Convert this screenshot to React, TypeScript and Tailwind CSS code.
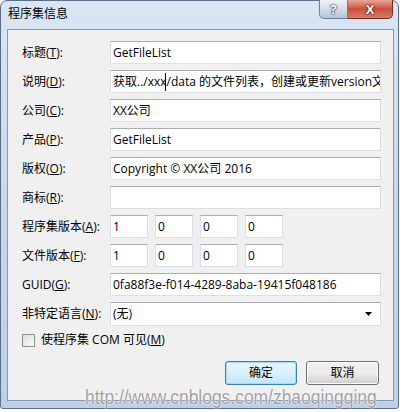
import React from "react";

const FONT = '"Segoe UI", "Open Sans", "Noto Sans CJK SC", sans-serif';

function TextBox({ children, className = "" }: { children?: React.ReactNode; className?: string }) {
  return (
    <div
      className={
        "h-[23px] min-w-0 bg-white border border-[#dcdfe6] border-t-[#abadb3] flex items-center pl-[2px] overflow-hidden whitespace-nowrap text-[12px] text-black " +
        className
      }
    >
      {children}
    </div>
  );
}

function Row({ label, u, rest, children }: { label: string; u: string; rest?: string; children: React.ReactNode }) {
  return (
    <div className="flex items-center h-[23px]">
      <div className="w-[88px] shrink-0 text-[12px] text-black whitespace-nowrap">
        {label}(<span className="underline">{u}</span>){rest ?? ":"}
      </div>
      <div className="flex-1 min-w-0">{children}</div>
    </div>
  );
}

function Versions() {
  return (
    <div className="flex gap-[7px]">
      <TextBox className="w-[38px]">1</TextBox>
      <TextBox className="w-[38px]">0</TextBox>
      <TextBox className="w-[38px]">0</TextBox>
      <TextBox className="w-[38px]">0</TextBox>
    </div>
  );
}

export default function App() {
  return (
    <div className="w-[404px] h-[412px] bg-white relative overflow-hidden" style={{ fontFamily: FONT }}>
      <div className="w-[399px] h-[409px] rounded-t-[7px] rounded-b-[3px] border border-[#5b6e86] bg-gradient-to-b from-[#d9e6f4] via-[#c6d8ec] to-[#bcd0e8] flex flex-col">
        {/* title bar */}
        <div className="h-[28px] flex items-start pl-[7px] pr-[5px]">
          <div className="mt-[5px] text-[12px] text-black leading-[16px] flex-1">程序集信息</div>
          <div className="flex -mt-px">
            <div className="w-[29px] h-[19px] rounded-bl-[5px] border border-[#6e7f95] border-t-0 bg-gradient-to-b from-[#edf2f8] via-[#d3dde9] to-[#b3c4da] flex items-center justify-center">
              <span className="text-[13px] font-bold text-white leading-none [text-shadow:0_0_1px_#333,0_0_1px_#333,0_0_2px_#333]">?</span>
            </div>
            <div className="w-[45px] h-[19px] rounded-br-[5px] border border-[#6e2e24] border-t-0 border-l-0 bg-gradient-to-b from-[#e9a596] via-[#c94f3a] to-[#d87c66] flex items-center justify-center">
              <span className="text-[13px] font-bold text-white leading-none [text-shadow:0_0_1px_#43140c,0_0_1px_#43140c,0_0_2px_#43140c]">X</span>
            </div>
          </div>
        </div>
        {/* content */}
        <div className="ml-[6px] mr-[4px] h-[372px] border border-[#8398b4] bg-[#f0f0f0] pt-[11px] pl-[14px] pr-[12px] flex flex-col">
          <div className="flex flex-col gap-[6px]">
            <Row label="标题" u="T">
              <TextBox>GetFileList</TextBox>
            </Row>
            <Row label="说明" u="D">
              <TextBox>
                获取../xxx<span className="inline-block w-px h-[18px] bg-black -ml-[2px] mr-px shrink-0" />/data 的文件列表，创建或更新version文件
              </TextBox>
            </Row>
            <Row label="公司" u="C">
              <TextBox>XX公司</TextBox>
            </Row>
            <Row label="产品" u="P">
              <TextBox>GetFileList</TextBox>
            </Row>
            <Row label="版权" u="O">
              <TextBox>Copyright © XX公司 2016</TextBox>
            </Row>
            <Row label="商标" u="R">
              <TextBox />
            </Row>
            <Row label="程序集版本" u="A">
              <Versions />
            </Row>
            <Row label="文件版本" u="F">
              <Versions />
            </Row>
            <Row label="GUID" u="G">
              <TextBox>0fa88f3e-f014-4289-8aba-19415f048186</TextBox>
            </Row>
            <Row label="非特定语言" u="N">
              <div className="h-[24px] bg-white border border-[#dcdfe6] border-t-[#abadb3] flex items-center pl-[2px] pr-[8px] text-[12px] text-black">
                <span className="flex-1">(无)</span>
                <svg width="7" height="4" viewBox="0 0 7 4">
                  <path d="M0 0H7L3.5 4Z" fill="#000" />
                </svg>
              </div>
            </Row>
          </div>
          <div className="flex items-center mt-[8px] h-[14px] pl-[0px]">
            <div className="w-[13px] h-[13px] border border-[#8e8f8f] bg-gradient-to-br from-[#dcdcdc] to-[#fbfbfb]" />
            <span className="ml-[6px] text-[12px] text-black">
              使程序集 COM 可见(<span className="underline">M</span>)
            </span>
          </div>
          <div className="flex justify-end gap-[9px] mt-[14px] pr-[2px]">
            <div className="w-[72px] h-[24px] rounded-[3px] border border-[#3c7fb1] bg-gradient-to-b from-[#eaf6fd] via-[#d9f0fc] to-[#bee6fd] flex items-center justify-center text-[12px] text-black shadow-[inset_0_0_0_1px_#a7d9f5]">
              确定
            </div>
            <div className="w-[73px] h-[24px] rounded-[3px] border border-[#707070] bg-gradient-to-b from-[#f2f2f2] via-[#ebebeb] to-[#cfcfcf] flex items-center justify-center text-[12px] text-black shadow-[inset_0_0_0_1px_#fcfcfc]">
              取消
            </div>
          </div>
        </div>
      </div>
      {/* watermark */}
      <div
        className="absolute left-[85px] top-[384px] text-[21px] leading-[26px] text-[#a3a3a3] whitespace-nowrap origin-left scale-x-[0.83] [text-shadow:0_0_2px_#fff,0_0_1px_#fff]"
        style={{ fontFamily: '"Liberation Sans", Arial, sans-serif' }}
      >
        http://www.cnblogs.com/zhaoqingqing
      </div>
    </div>
  );
}
